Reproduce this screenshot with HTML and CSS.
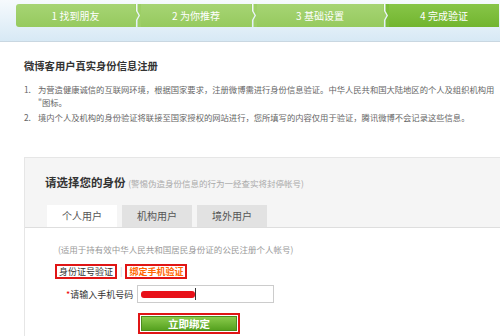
FILE: index.html
```html
<!DOCTYPE html>
<html lang="zh-CN">
<head>
  <meta charset="UTF-8">
  <title>微博客用户真实身份信息注册</title>
  <link rel="stylesheet" href="styles.css">
</head>
<body>
  <header class="top">
    <div class="steps">
      <div class="step step-1">1 找到朋友</div>
      <svg class="sep" width="6" height="23" viewBox="0 0 6 23">
        <polygon points="0,0 1,0 1,7 3.5,11.5 1,16 1,23 0,23" fill="#9dcf66"/>
        <polygon points="2.5,0 6,0 6,23 2.5,23 2.5,16 5,11.5 2.5,7" fill="#9dcf66"/>
      </svg>
      <div class="step step-2">2 为你推荐</div>
      <svg class="sep" width="6" height="23" viewBox="0 0 6 23">
        <polygon points="0,0 1,0 1,7 3.5,11.5 1,16 1,23 0,23" fill="#9dcf66"/>
        <polygon points="2.5,0 6,0 6,23 2.5,23 2.5,16 5,11.5 2.5,7" fill="#9dcf66"/>
      </svg>
      <div class="step step-3">3 基础设置</div>
      <svg class="sep" width="6" height="23" viewBox="0 0 6 23">
        <polygon points="0,0 1,0 1,7 3.5,11.5 1,16 1,23 0,23" fill="#9dcf66"/>
        <polygon points="2.5,0 6,0 6,23 2.5,23 2.5,16 5,11.5 2.5,7" fill="#7cbd3a"/>
      </svg>
      <div class="step step-4 current">4 完成验证</div>
    </div>
  </header>

  <div class="intro">
    <h1 class="intro-title">微博客用户真实身份信息注册</h1>
    <ol class="rules">
      <li><span class="num">1.</span><span>为营造健康诚信的互联网环境，根据国家要求，注册微博需进行身份信息验证。中华人民共和国大陆地区的个人及组织机构用<br>"图标。</span></li>
      <li><span class="num">2.</span><span>境内个人及机构的身份验证将联接至国家授权的网站进行，您所填写的内容仅用于验证，腾讯微博不会记录这些信息。</span></li>
    </ol>
  </div>

  <div class="panel">
    <div class="panel-head">
      <div class="panel-title">请选择您的身份 <span class="warn">(警惕伪造身份信息的行为一经查实将封停帐号)</span></div>
      <div class="tabs">
        <div class="tab active">个人用户</div>
        <div class="tab">机构用户</div>
        <div class="tab">境外用户</div>
      </div>
    </div>
    <div class="panel-body">
      <p class="tip">(适用于持有效中华人民共和国居民身份证的公民注册个人帐号)</p>
      <div class="verify">
        <span class="mark">身份证号验证</span>
        <span class="bar">|</span>
        <span class="mark selected">绑定手机验证</span>
      </div>
      <div class="phone-row">
        <label class="phone-label"><em>*</em>请输入手机号码</label>
        <div class="phone-input"><span class="redact"></span><span class="caret"></span></div>
      </div>
      <div class="submit-wrap">
        <button class="submit">立即绑定</button>
      </div>
    </div>
  </div>
</body>
</html>
```

FILE: styles.css
```css
body {
  margin: 0;
  width: 500px;
  height: 336px;
  overflow: hidden;
  background-color: #fff;
  font-family: "Noto Sans CJK SC", "Liberation Sans", sans-serif;
  color: #333;
}

.top {
  height: 42px;
  box-sizing: border-box;
  padding: 4px 0 0 16px;
  background: linear-gradient(#f6fafd, #d7e9f5);
  border-bottom: 1px solid #c9d7e1;
}

.steps {
  display: flex;
  height: 23px;
}

.step {
  flex: none;
  background: linear-gradient(#a6d474, #96ca5e);
  color: #fff;
  font-size: 10px;
  line-height: 23px;
  text-align: center;
}

.step-1 {
  width: 119px;
  border-radius: 3px 0 0 3px;
}

.step-2 {
  width: 110px;
}

.step-3 {
  width: 126px;
}

.step-4 {
  width: 110px;
}

.step.current {
  background: linear-gradient(#87c548, #72b52f);
}

.sep {
  flex: none;
  display: block;
}

.intro {
  padding-left: 24px;
}

.intro-title {
  margin: 17px 0 0;
  font-size: 10.3px;
  line-height: 14px;
  font-weight: bold;
  color: #333;
}

.rules {
  list-style: none;
  margin: 10px 0 0;
  padding: 0;
  font-size: 8.3px;
  line-height: 13px;
  color: #666;
}

.rules li {
  display: flex;
  margin-bottom: 2px;
  white-space: nowrap;
}

.rules .num {
  flex: none;
  width: 14px;
}

.panel {
  margin: 33px 0 0 24px;
  border: 1px solid #e6e6e6;
  border-right: none;
}

.panel-head {
  background-color: #f5f5f5;
  padding: 16px 0 0 20px;
  border-bottom: 1px solid #dedede;
}

.panel-title {
  font-size: 11.5px;
  line-height: 16px;
  font-weight: bold;
  color: #333;
}

.warn {
  font-size: 8.5px;
  font-weight: normal;
  color: #aaa;
}

.tabs {
  display: flex;
  gap: 5px;
  margin: 14px 0 0 2px;
}

.tab {
  width: 70px;
  height: 22px;
  line-height: 22px;
  text-align: center;
  font-size: 10px;
  color: #555;
  background-color: #e2e2e2;
}

.tab.active {
  background-color: #fff;
}

.panel-body {
  padding: 15px 0 10px 30px;
}

.tip {
  margin: 0 0 0 3px;
  font-size: 8.5px;
  line-height: 12px;
  color: #999;
}

.verify {
  display: flex;
  align-items: center;
  margin-top: 9px;
  font-size: 9px;
}

.mark {
  border: 2px solid #e01515;
  padding: 0 2px;
  line-height: 11px;
  color: #333;
}

.mark.selected {
  color: #f60;
  font-weight: bold;
}

.bar {
  margin: 0 3px;
  color: #ccc;
}

.phone-row {
  display: flex;
  align-items: center;
  margin: 6px 0 0 11px;
}

.phone-label {
  width: 71px;
  font-size: 9px;
  color: #333;
}

.phone-label em {
  font-style: normal;
  color: #e00;
}

.phone-input {
  display: flex;
  align-items: center;
  width: 132px;
  height: 16px;
  border: 1px solid #ccc;
  padding-left: 3px;
}

.redact {
  width: 54px;
  height: 7px;
  border-radius: 3px;
  background-color: #e8111a;
}

.caret {
  width: 1px;
  height: 12px;
  background-color: #333;
}

.submit-wrap {
  display: inline-block;
  margin: 10px 0 0 83px;
  border: 2px solid #e01515;
  padding: 1px;
}

.submit {
  display: block;
  width: 96px;
  height: 15px;
  padding: 0;
  border: 1px solid #4a8c1e;
  background: linear-gradient(#8acb4c, #55a11f);
  color: #fff;
  font-family: inherit;
  font-size: 10.5px;
  font-weight: bold;
  line-height: 13px;
}
```
